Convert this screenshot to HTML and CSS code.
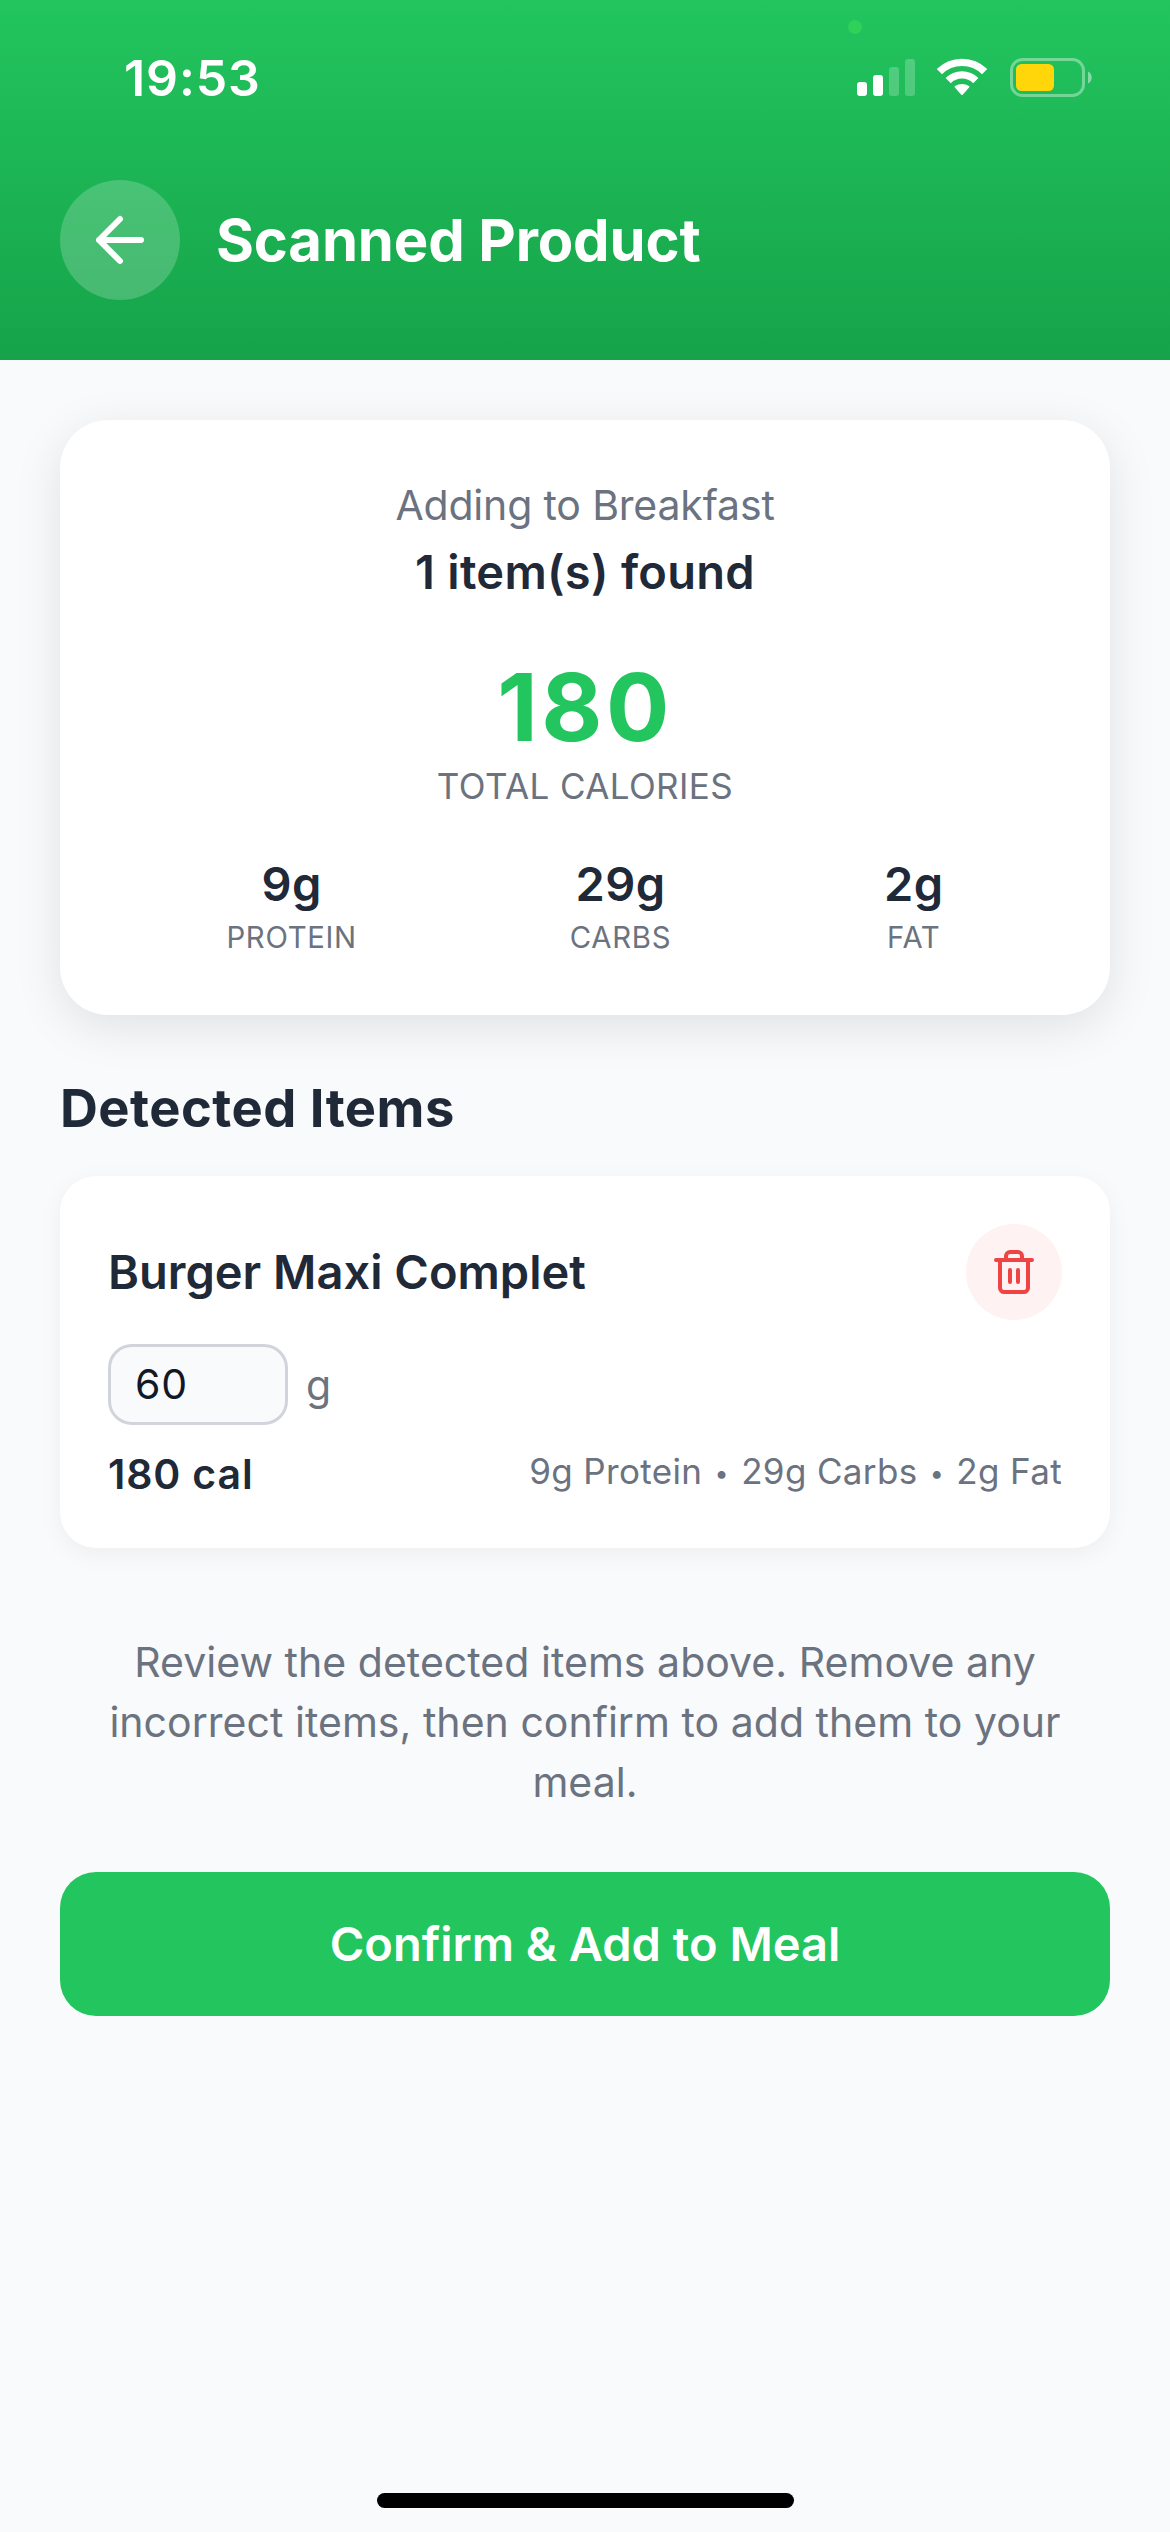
FILE: index.html
```html
<!DOCTYPE html>
<html lang="en">
<head>
<meta charset="utf-8">
<meta name="viewport" content="width=device-width, initial-scale=1">
<title>Scanned Product</title>
<link rel="stylesheet" href="styles.css">
</head>
<body>
<div class="screen">
  <header class="header">
    <span class="camera-dot"></span>
    <div class="status-bar">
      <span class="time">19:53</span>
      <div class="status-icons">
        <svg class="signal" width="58" height="39" viewBox="0 0 58 39" fill="#fff">
          <rect x="0" y="24" width="10" height="14" rx="3"/>
          <rect x="16" y="17" width="10" height="21" rx="3"/>
          <rect x="32" y="9" width="10" height="29" rx="3" opacity=".22"/>
          <rect x="48" y="1" width="10" height="37" rx="3" opacity=".22"/>
        </svg>
        <svg class="wifi" width="50" height="39" viewBox="0 0 50 39">
          <g fill="none" stroke="#fff" stroke-width="7.4">
            <path d="M2.4 13.6A32.2 32.2 0 0 1 47.6 13.6" stroke-linejoin="round"/>
            <path d="M11.2 22.6A19.6 19.6 0 0 1 38.8 22.6"/>
          </g>
          <path d="M17.9 29.4C17.4 28.9 17.5 28.4 18 28.1C22 25.2 28 25.2 32 28.1C32.5 28.4 32.6 28.9 32.1 29.4L25.7 36.7C25.3 37.2 24.7 37.2 24.3 36.7Z" fill="#fff"/>
        </svg>
        <svg class="battery" width="82" height="39" viewBox="0 0 82 39">
          <rect x="1.5" y="1.5" width="72" height="36" rx="11" fill="none" stroke="#fff" stroke-width="3" opacity=".38"/>
          <rect x="6" y="6" width="38" height="27" rx="5.5" fill="#ffd60a"/>
          <path d="M78 13.5C83 15.5 83 23.500 78 25.500Z" fill="#fff" opacity=".45"/>
        </svg>
      </div>
    </div>
    <div class="nav">
      <button class="back" aria-label="Back">
        <svg width="72" height="72" viewBox="0 0 24 24" fill="none" stroke="#fff" stroke-width="2" stroke-linecap="round" stroke-linejoin="round"><path d="M12 19l-7-7 7-7M19 12H5"/></svg>
      </button>
      <h1 class="title">Scanned Product</h1>
    </div>
  </header>

  <main class="content">
    <section class="summary">
      <p class="meal">Adding to Breakfast</p>
      <p class="found">1 item(s) found</p>
      <p class="calories">180</p>
      <p class="calories-label">Total Calories</p>
      <div class="macros">
        <div class="macro"><span class="macro-value">9g</span><span class="macro-label">Protein</span></div>
        <div class="macro"><span class="macro-value">29g</span><span class="macro-label">Carbs</span></div>
        <div class="macro"><span class="macro-value">2g</span><span class="macro-label">Fat</span></div>
      </div>
    </section>

    <h2 class="section-title">Detected Items</h2>

    <article class="item">
      <div class="item-head">
        <h3 class="item-name">Burger Maxi Complet</h3>
        <button class="delete" aria-label="Remove item">
          <svg width="48" height="48" viewBox="0 0 24 24" fill="none" stroke="#ef4444" stroke-width="2" stroke-linecap="round" stroke-linejoin="round"><path d="M3 6h18M19 6v14c0 1-1 2-2 2H7c-1 0-2-1-2-2V6M8 6V4c0-1 1-2 2-2h4c1 0 2 1 2 2v2M10 11v6M14 11v6"/></svg>
        </button>
      </div>
      <div class="quantity">
        <div class="quantity-input">60</div>
        <span class="unit">g</span>
      </div>
      <div class="item-foot">
        <span class="item-calories">180 cal</span>
        <span class="item-macros">9g Protein <span class="bullet">•</span> 29g Carbs <span class="bullet">•</span> 2g Fat</span>
      </div>
    </article>

    <p class="hint">Review the detected items above. Remove any incorrect items, then confirm to add them to your meal.</p>
    <button class="confirm">Confirm &amp; Add to Meal</button>
  </main>
  <div class="home-indicator"></div>
</div>
</body>
</html>
```
FILE: styles.css
```css
* { box-sizing: border-box; margin: 0; padding: 0; }

body {
  background: #f9fafb;
  font-family: Inter, "Liberation Sans", sans-serif;
  color: #1f2937;
}

button { border: 0; font: inherit; }
svg { display: block; }

.screen {
  display: flex;
  flex-direction: column;
  width: 1170px;
  height: 2532px;
  padding-bottom: 24px;
  background: #f9fafc;
}

/* Header */
.header {
  position: relative;
  height: 360px;
  background: linear-gradient(#22c55e, #16a34a);
  color: #fff;
}
.camera-dot {
  position: absolute;
  top: 20px;
  left: 848px;
  width: 14px;
  height: 14px;
  border-radius: 50%;
  background: #30d158;
}
.status-bar {
  display: flex;
  align-items: center;
  justify-content: space-between;
  height: 156px;
  padding: 0 78px 0 124px;
}
.time {
  font-size: 50px;
  font-weight: 600;
  letter-spacing: .9px;
}
.status-icons { display: flex; align-items: center; padding-bottom: 1px; }
.wifi { margin: 0 23px 0 22px; }
.nav {
  display: flex;
  align-items: center;
  gap: 36px;
  padding: 24px 60px 0;
}
.back {
  display: grid;
  place-items: center;
  width: 120px;
  height: 120px;
  border-radius: 50%;
  background: rgba(255, 255, 255, .2);
}
.title {
  font-size: 58px;
  font-weight: 700;
  line-height: 72px;
  letter-spacing: -.15px;
}

/* Summary card */
.content {
  display: flex;
  flex-direction: column;
  padding: 60px 60px 0;
}
.summary {
  padding: 60px 60px 59px;
  border-radius: 48px;
  background: #fff;
  box-shadow: 0 12px 48px rgba(0, 0, 0, .1);
  text-align: center;
}
.meal {
  font-size: 41px;
  line-height: 50px;
  letter-spacing: -.17px;
  color: #6b7280;
}
.found {
  margin-top: 13px;
  font-size: 47px;
  font-weight: 600;
  line-height: 58px;
  letter-spacing: .28px;
}
.calories {
  margin-top: 48px;
  font-size: 94px;
  font-weight: 700;
  line-height: 116px;
  letter-spacing: 3.500px;
  color: #22c55e;
}
.calories-label {
  font-size: 35px;
  line-height: 43px;
  letter-spacing: .4px;
  text-transform: uppercase;
  color: #6b7280;
}
.macros {
  display: flex;
  justify-content: space-around;
  margin-top: 47px;
}
.macro {
  display: flex;
  flex-direction: column;
  align-items: center;
  gap: 7px;
}
.macro-value {
  font-size: 47px;
  font-weight: 600;
  line-height: 58px;
  letter-spacing: .4px;
}
.macro-label {
  font-size: 29.300px;
  line-height: 36px;
  letter-spacing: .7px;
  text-transform: uppercase;
  color: #6b7280;
}

/* Detected items */
.section-title {
  margin: 61px 0 36px;
  font-size: 52.500px;
  font-weight: 700;
  line-height: 64px;
  letter-spacing: .46px;
}
.item {
  padding: 48px 48px 49px;
  border-radius: 36px;
  background: #fff;
  box-shadow: 0 6px 24px rgba(0, 0, 0, .05);
}
.item-head {
  display: flex;
  align-items: center;
  justify-content: space-between;
}
.item-name {
  font-size: 47px;
  font-weight: 600;
  line-height: 58px;
}
.delete {
  display: grid;
  place-items: center;
  width: 96px;
  height: 96px;
  border-radius: 50%;
  background: #fef2f2;
}
.quantity {
  display: flex;
  align-items: center;
  gap: 18px;
  margin-top: 24px;
  font-size: 41px;
}
.quantity-input {
  width: 180px;
  height: 81px;
  padding: 0 24px;
  border: 3px solid #d1d5db;
  border-radius: 24px;
  background: #f9fafb;
  line-height: 75px;
  letter-spacing: .8px;
  color: #111827;
}
.unit { color: #6b7280; }
.item-foot {
  display: flex;
  align-items: flex-start;
  justify-content: space-between;
  margin-top: 24px;
}
.item-calories {
  font-size: 41px;
  font-weight: 600;
  line-height: 50px;
  letter-spacing: .85px;
}
.item-macros {
  font-size: 35px;
  line-height: 44px;
  letter-spacing: .35px;
  color: #6b7280;
}
.bullet {
  margin: 0 2px;
  font-size: 25px;
  line-height: 1;
  vertical-align: 2px;
}

/* Confirmation */
.hint {
  margin: 84px 0 60px;
  font-size: 41px;
  line-height: 60px;
  letter-spacing: .03px;
  text-align: center;
  color: #6b7280;
}
.confirm {
  height: 144px;
  padding-bottom: 2px;
  border-radius: 36px;
  background: #22c55e;
  color: #fff;
  font-size: 47px;
  font-weight: 600;
}
.home-indicator {
  width: 417px;
  height: 15px;
  margin: auto auto 0;
  border-radius: 8px;
  background: #000;
}
```
